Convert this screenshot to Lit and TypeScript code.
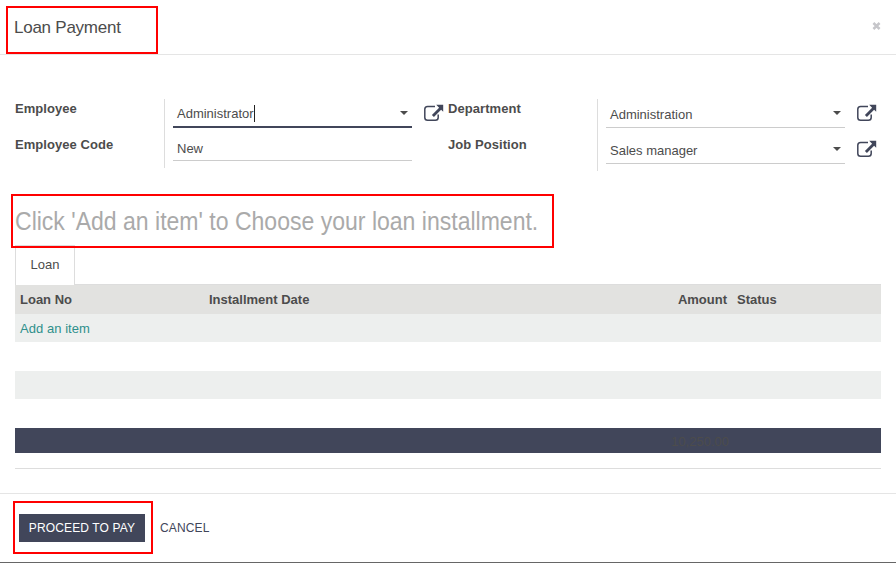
import { LitElement, html, css, svg } from "lit";
import { customElement, property } from "lit/decorators.js";

@customElement("external-link")
class ExternalLink extends LitElement {
  static styles = css`
    :host { display: block; width: 20px; height: 18px; }
    .icon { display: block; }
  `;
  render() {
    return html`<svg class="icon" width="20" height="18" viewBox="0 0 20 18">
      ${svg`<path d="M11 2.5H3.6Q.8 2.5 .8 5.3V13.4Q.8 16.2 3.6 16.2H11.4Q14.2 16.2 14.2 13.4V10.6" fill="none" stroke="#41465a" stroke-width="1.5"/>
      <path d="M12.2 .8H19.2V7.8L17.1 5.7L9.9 12.9L7.9 10.9L15.1 3.7Z" fill="#41465a"/>`}
    </svg>`;
  }
}

@customElement("form-field")
class FormField extends LitElement {
  @property() value = "";
  @property({ type: Boolean }) select = false;
  @property({ type: Boolean }) active = false;
  static styles = css`
    :host { display: flex; }
    .input { box-sizing: border-box; width: 239px; height: 26px; border-bottom: 1px solid #ccc; display: flex; align-items: center; padding: 0 4px; }
    .input.plain { padding-top: 2px; }
    .input.active { height: 27px; border-bottom: 2px solid #41465a; padding-top: 1px; }
    .caret { width: 1px; height: 17px; background: #222; margin-bottom: 2px; }
    .arrow { margin-left: auto; width: 0; height: 0; border: 4px solid transparent; border-top-color: #4c4c4c; border-bottom: 0; margin-bottom: 3px; }
    .link { margin: 2px 0 0 12px; }
    .active + .link { margin-top: 3px; }
  `;
  render() {
    return html`<div class="input ${this.active ? "active" : this.select ? "" : "plain"}">
        <span>${this.value}</span>
        ${this.active ? html`<i class="caret"></i>` : ""}
        ${this.select ? html`<i class="arrow"></i>` : ""}
      </div>
      ${this.select ? html`<external-link class="link"></external-link>` : ""}`;
  }
}

@customElement("app-root")
class AppRoot extends LitElement {
  static styles = css`
    :host { display: block; position: relative; box-sizing: border-box; height: 563px; overflow: hidden; background: #fff; color: #4c4c4c; font: 13px/18px "Liberation Sans", Arial, sans-serif; border-bottom: 1px solid #666; }
    .header { box-sizing: border-box; height: 55px; border-bottom: 1px solid #e5e5e5; display: flex; justify-content: space-between; align-items: center; padding: 0 14px; }
    .title { font-size: 17px; font-weight: 400; margin: 0; padding-top: 1px; letter-spacing: -0.25px; }
    .close { width: 9px; height: 8px; display: block; margin: 0 1px 3px 0; }
    .body { height: 439px; box-sizing: border-box; padding: 44px 15px 0; border-bottom: 1px solid #e5e5e5; }
    .groups { display: grid; grid-template-columns: 433px 433px; height: 96px; }
    .group { display: flex; }
    .labels { width: 149px; font-weight: 700; letter-spacing: 0.06px; }
    .label { height: 36px; line-height: 20px; }
    .fields { border-left: 1px solid #ddd; padding-left: 8px; height: 69px; }
    .fields.right { height: 72px; }
    .left .first { margin: 2px 0 7px; }
    .right .first { margin: 3px 0 10px; }
    .hint { margin: 0; height: 50px; font-size: 25px; line-height: 52px; font-weight: 400; color: #aaa; white-space: nowrap; transform: scaleX(0.921); transform-origin: left; }
    .tabs { height: 39px; border-bottom: 1px solid #ddd; display: flex; }
    .tab { box-sizing: border-box; width: 60px; height: 40px; border: 1px solid #ddd; border-bottom: 0; background: #fff; text-align: center; line-height: 37px; }
    .row { display: grid; grid-template-columns: 189px 528px 149px; height: 28px; line-height: 30px; margin-bottom: 29px; background: #edefee; }
    .row.head { height: 29px; line-height: 29px; margin: 0; background: #e2e2e0; font-weight: 700; }
    .row.total { height: 25px; line-height: 27px; margin: 0; background: #41465a; }
    .cell { padding: 0 5px; }
    .split { display: flex; justify-content: space-between; }
    .num { grid-column: 2; text-align: right; padding-right: 3px; }
    .add { color: #2f8f8c; letter-spacing: 0.05px; }
    .end { height: 15px; border-bottom: 1px solid #ddd; }
    .footer { display: flex; gap: 15px; padding: 20px 19px; line-height: 28px; font-size: 12px; }
    .pay { width: 126px; height: 28px; background: #41465a; color: #fff; text-align: center; letter-spacing: 0.13px; }
    .cancel { color: #41465a; letter-spacing: 0.15px; }
    .mark { position: absolute; box-sizing: border-box; border: 2px solid #f00; }
    .mark-title { left: 6px; top: 6px; width: 152px; height: 48px; }
    .mark-hint { left: 11px; top: 194px; width: 543px; height: 54px; }
    .mark-pay { left: 13px; top: 501px; width: 140px; height: 53px; }
  `;
  render() {
    return html`
      <header class="header"><h1 class="title">Loan Payment</h1><svg class="close" viewBox="0 0 9 8"><path d="M1.4 1L7.6 7M7.6 1L1.4 7" stroke="#c6c6ca" stroke-width="2.5"/></svg></header>
      <main class="body">
        <div class="groups">
          <div class="group">
            <div class="labels"><div class="label">Employee</div><div class="label">Employee Code</div></div>
            <div class="fields left">
              <form-field class="first" value="Administrator" select active></form-field>
              <form-field value="New"></form-field>
            </div>
          </div>
          <div class="group">
            <div class="labels"><div class="label">Department</div><div class="label">Job Position</div></div>
            <div class="fields right">
              <form-field class="first" value="Administration" select></form-field>
              <form-field value="Sales manager" select></form-field>
            </div>
          </div>
        </div>
        <h2 class="hint">Click 'Add an item' to Choose your loan installment.</h2>
        <div class="tabs"><div class="tab">Loan</div></div>
        <div class="row head"><span class="cell">Loan No</span><span class="cell split"><span>Installment Date</span><span>Amount</span></span><span class="cell">Status</span></div>
        <div class="row"><span class="cell add">Add an item</span></div>
        <div class="row"></div>
        <div class="row total"><span class="num">10,250.00</span></div>
        <div class="end"></div>
      </main>
      <footer class="footer"><div class="pay">PROCEED TO PAY</div><div class="cancel">CANCEL</div></footer>
      <div class="mark mark-title"></div><div class="mark mark-hint"></div><div class="mark mark-pay"></div>
    `;
  }
}
